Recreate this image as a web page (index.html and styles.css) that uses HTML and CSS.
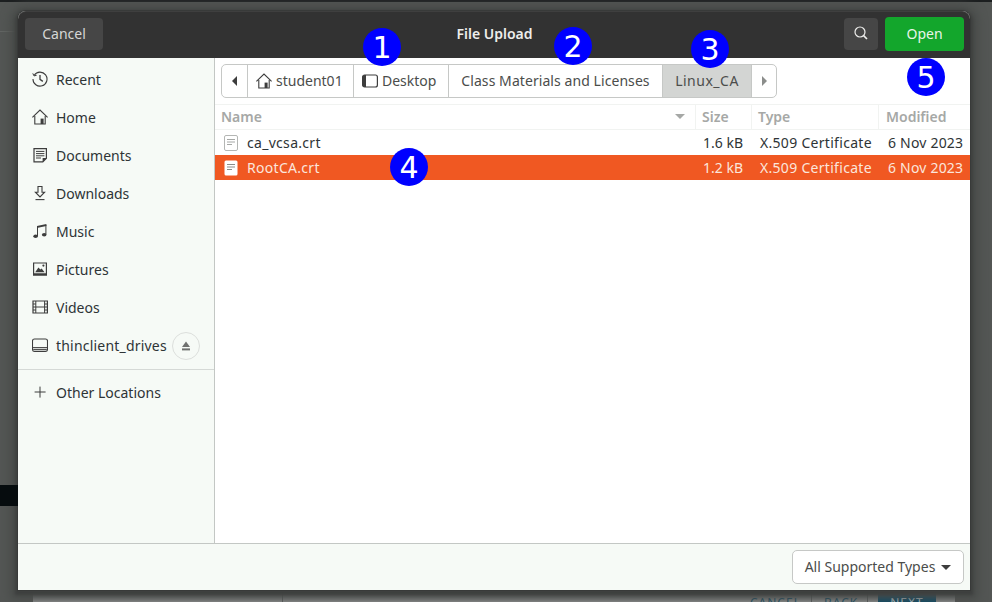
FILE: index.html
```html
<!DOCTYPE html>
<html lang="en">

<head>
    <meta charset="UTF-8">
    <title>File Upload</title>
    <link rel="stylesheet" href="styles.css">
</head>

<body>
    <div class="back-topbar"></div>
    <div class="back-rule"></div>
    <div class="back-black"></div>
    <div class="back-wizard">
        <span class="wiz-cell wiz-cancel">CANCEL</span>
        <span class="wiz-cell wiz-back">BACK</span>
        <span class="wiz-next">NEXT</span>
    </div>

    <div class="dialog">
        <header class="titlebar">
            <div class="title-left"><button class="btn btn-dark btn-cancel">Cancel</button></div>
            <div class="title">File Upload</div>
            <div class="title-right">
                <button class="btn btn-dark btn-search" aria-label="Search">
                    <svg width="16" height="16" viewBox="0 0 16 16" fill="none" stroke="#eeeeec" stroke-width="1.2"><circle cx="7" cy="7" r="5"/><path d="M10.6 10.6 14 14" stroke-width="1.6"/></svg>
                </button>
                <button class="btn btn-open">Open</button>
            </div>
        </header>

        <div class="content">
            <nav class="sidebar">
                <div class="place">
                    <svg class="place-icon" viewBox="0 0 16 16" fill="none" stroke="#3d3d3d" stroke-width="1.1"><path d="M2.2 4.2A7 7 0 1 1 1 8"/><path d="M.8 2.4 2 4.9l2.6-.6" stroke-width="1"/><path d="M8 4v4.4l2.8 2" stroke-width="1.3"/></svg>
                    <span>Recent</span>
                </div>
                <div class="place">
                    <svg class="place-icon" viewBox="0 0 16 16" fill="none" stroke="#3d3d3d" stroke-width="1.1"><path d="M.4 8.4 8 1l7.6 7.4"/><path d="M2.8 7v8h10.4V7"/><rect x="8.6" y="9.6" width="3" height="5.4" fill="#3d3d3d" stroke="none"/></svg>
                    <span>Home</span>
                </div>
                <div class="place">
                    <svg class="place-icon" viewBox="0 0 16 16" fill="none" stroke="#3d3d3d" stroke-width="1.2"><path d="M2 1.6h12.4v9.6l-3.6 3.6H2z"/><path d="M4 4.4h8.4M4 6.6h8.4M4 8.8h8.4M4 11h5" stroke-width="1"/><path d="M10.6 15v-4h4z" fill="#3d3d3d" stroke="none"/></svg>
                    <span>Documents</span>
                </div>
                <div class="place">
                    <svg class="place-icon" viewBox="0 0 16 16" fill="none" stroke="#3d3d3d" stroke-width="1.1"><path d="M6 1.5h4v5.7h2.6L8 12 3.4 7.2H6z"/><path d="M3.5 14.6h9"/></svg>
                    <span>Downloads</span>
                </div>
                <div class="place">
                    <svg class="place-icon" viewBox="0 0 16 16" fill="#3d3d3d"><path d="M5 3 14.4 1v1.9L6 4.7V13H5z"/><path d="M13.4 2h1v9.6h-1z"/><ellipse cx="3.6" cy="13.2" rx="2.3" ry="1.8"/><ellipse cx="12.2" cy="11.8" rx="2.3" ry="1.8"/></svg>
                    <span>Music</span>
                </div>
                <div class="place">
                    <svg class="place-icon" viewBox="0 0 16 16" fill="#3d3d3d"><path d="M1 1.4h14v13.4H1zm1.2 1.2v9.6h11.6V2.6z" fill-rule="evenodd"/><path d="M3.2 11.2 6.4 6.6l2 2 1.2-1 3 3.6z"/><circle cx="11.4" cy="4.6" r="1.1"/></svg>
                    <span>Pictures</span>
                </div>
                <div class="place">
                    <svg class="place-icon" viewBox="0 0 16 16" fill="none" stroke="#3d3d3d" stroke-width="1.2"><path d="M1 2h14.4v12H1z"/><path d="M3.8 2v12M12.6 2v12M3.8 8h8.8M1 5h2.8M1 8h2.8M1 11h2.8M12.6 5h2.8M12.6 8h2.8M12.6 11h2.8" stroke-width="1"/></svg>
                    <span>Videos</span>
                </div>
                <div class="place place-drive">
                    <svg class="place-icon" viewBox="0 0 16 16" fill="none" stroke="#3d3d3d" stroke-width="1.1"><rect x=".5" y="2" width="15" height="12.4" rx="2"/><path d="M.8 10.6h14.4M1.2 12.4h13.6" stroke-width="1"/></svg>
                    <span class="drive-name">thinclient_drives</span>
                    <span class="eject"><svg width="10" height="10" viewBox="0 0 10 10" fill="#6f716f"><path d="M5 .6 9 6H1z"/><path d="M1 7.4h8v2H1z"/></svg></span>
                </div>
                <div class="side-sep"></div>
                <div class="place place-other">
                    <svg class="place-icon" viewBox="0 0 16 16" fill="none" stroke="#3d3d3d" stroke-width="1"><path d="M8 2.6v11M2.6 8h11"/></svg>
                    <span>Other Locations</span>
                </div>
            </nav>

            <main class="browser">
                <div class="pathbar">
                    <div class="crumb crumb-arrow"><span class="tri tri-left"></span></div>
                    <div class="crumb crumb-home">
                        <svg width="16" height="16" viewBox="0 0 16 16" fill="none" stroke="#3d3d3d" stroke-width="1.1"><path d="M.4 8.4 8 1l7.6 7.4"/><path d="M2.8 7v8h10.4V7"/><rect x="8.6" y="9.6" width="3" height="5.4" fill="#3d3d3d" stroke="none"/></svg>
                        <span>student01</span>
                    </div>
                    <div class="crumb crumb-desktop">
                        <svg width="16" height="16" viewBox="0 0 16 16" fill="none"><rect x=".6" y="2" width="14.8" height="12" rx="2" stroke="#3d3d3d" stroke-width="1.2"/><path d="M2.6 2H4v12H2.6a2 2 0 0 1-2-2V4a2 2 0 0 1 2-2z" fill="#3d3d3d"/></svg>
                        <span>Desktop</span>
                    </div>
                    <div class="crumb crumb-class">Class Materials and Licenses</div>
                    <div class="crumb crumb-linux">Linux_CA</div>
                    <div class="crumb crumb-arrow crumb-end"><span class="tri tri-right"></span></div>
                </div>

                <div class="columns">
                    <div class="col col-name">Name<span class="sort"></span></div>
                    <div class="col">Size</div>
                    <div class="col">Type</div>
                    <div class="col col-date">Modified</div>
                </div>

                <div class="file">
                    <div class="file-name">
                        <svg width="16" height="16" viewBox="0 0 16 16" fill="#fff" stroke="#b4b6b4"><rect x="1.5" y=".5" width="13" height="15" rx="1.5"/><path d="M4 4.5h8M4 7h8M4 9.5h5" fill="none" stroke="#a6a8a6"/></svg>
                        <span>ca_vcsa.crt</span>
                    </div>
                    <div class="file-size">1.6 kB</div>
                    <div class="file-type">X.509 Certificate</div>
                    <div class="file-date">6 Nov 2023</div>
                </div>
                <div class="file file-selected">
                    <div class="file-name">
                        <svg width="16" height="16" viewBox="0 0 16 16" fill="#fff"><rect x="1.5" y=".5" width="13" height="15" rx="1.5"/><path d="M4 4.5h8M4 7h8M4 9.5h5" fill="none" stroke="#8b8d8b"/></svg>
                        <span>RootCA.crt</span>
                    </div>
                    <div class="file-size">1.2 kB</div>
                    <div class="file-type">X.509 Certificate</div>
                    <div class="file-date">6 Nov 2023</div>
                </div>
            </main>
        </div>

        <footer class="footer">
            <button class="filter">All Supported Types<span class="caret"></span></button>
        </footer>
    </div>

    <span class="badge badge-1">1</span>
    <span class="badge badge-2">2</span>
    <span class="badge badge-3">3</span>
    <span class="badge badge-4">4</span>
    <span class="badge badge-5">5</span>
</body>

</html>
```

FILE: styles.css
```css
* {
    margin: 0;
    padding: 0;
    box-sizing: border-box;
}

html,
body {
    height: 602px;
    overflow: hidden;
}

body {
    position: relative;
    padding: 11px 22px 12px 18px;
    display: flex;
    background-color: #535654;
    font-family: "Noto Sans", sans-serif;
    font-size: 14px;
    color: #2e3436;
}

button {
    font: inherit;
    border: none;
}

/* page behind the dialog */
.back-topbar {
    position: absolute;
    left: 0;
    top: 0;
    width: 100%;
    height: 2px;
    background-color: #1c1f20;
}

.back-rule {
    position: absolute;
    left: 0;
    top: 31px;
    width: 18px;
    height: 1px;
    background-color: #626563;
}

.back-black {
    position: absolute;
    z-index: 1;
    left: 0;
    top: 485px;
    width: 18px;
    height: 21px;
    background-color: #060c0e;
}

.back-wizard {
    position: absolute;
    left: 33px;
    top: 590px;
    width: 922px;
    height: 12px;
    background: linear-gradient(#6f7272, #9a9c9c);
    font-size: 12px;
    letter-spacing: 1px;
    color: #0b4f6c;
    overflow: hidden;
}

.wiz-cell {
    position: absolute;
    top: 0;
    height: 12px;
    padding-top: 7px;
    line-height: 12px;
    white-space: nowrap;
    border-left: 1px solid #5f6263;
}

.wiz-cancel {
    left: 249px;
    width: 0;
    padding-left: 467px;
}

.wiz-back {
    left: 778px;
    width: 57px;
    padding-left: 12px;
    border-right: 1px solid #5f6263;
}

.wiz-next {
    position: absolute;
    left: 845px;
    top: 0;
    width: 58px;
    height: 12px;
    padding-top: 7px;
    line-height: 12px;
    text-align: center;
    color: #d8e4ea;
    background-color: #004a6b;
}

/* dialog */
.dialog {
    position: relative;
    flex: 1;
    display: flex;
    flex-direction: column;
    border-radius: 8px 8px 0 0;
    background-color: #f6faf6;
    box-shadow: 0 0 0 1px #383a39, 0 2px 3px 3px #3e403f, 0 2px 10px 8px #484b49;
}

.titlebar {
    height: 47px;
    flex: none;
    display: grid;
    grid-template-columns: 1fr auto 1fr;
    align-items: center;
    padding: 0 6px 2px 7px;
    background-color: #323232;
    border-top: 1px solid #3f3f3f;
    border-radius: 8px 8px 0 0;
}

.title {
    padding-bottom: 2px;
    font-weight: 600;
    font-size: 14px;
    color: #eeeeec;
}

.title-right {
    display: flex;
    justify-content: flex-end;
    align-items: center;
    gap: 7px;
}

.btn {
    display: flex;
    align-items: center;
    justify-content: center;
    height: 32px;
    padding-bottom: 2px;
    border-radius: 4px;
    color: #d6d7d5;
}

.btn-dark {
    background-color: #464646;
}

.btn-cancel {
    width: 78px;
}

.btn-search {
    width: 34px;
}

.btn-open {
    width: 79px;
    height: 34px;
    background-color: #13a62c;
    color: #e8f5e9;
}

.content {
    flex: 1;
    display: flex;
    min-height: 0;
}

/* sidebar */
.sidebar {
    width: 197px;
    flex: none;
    padding-top: 3px;
    background-color: #f6faf6;
    border-right: 1px solid #c3c7c4;
}

.place {
    display: flex;
    align-items: center;
    height: 38px;
    padding-left: 14px;
    padding-bottom: 2px;
    gap: 8px;
}

.place-icon {
    width: 16px;
    height: 16px;
    flex: none;
}

.place-drive {
    padding-right: 14px;
}

.drive-name {
    flex: 1;
    letter-spacing: .2px;
    white-space: nowrap;
}

.eject {
    flex: none;
    width: 28px;
    height: 28px;
    margin: 2px 0 0 -8px;
    display: flex;
    align-items: center;
    justify-content: center;
    border: 1px solid #dcdfdc;
    border-radius: 50%;
}

.side-sep {
    height: 1px;
    margin-top: 4px;
    background-color: #d5d9d6;
}

.place-other {
    height: 46px;
}

/* file browser */
.browser {
    flex: 1;
    min-width: 0;
    background-color: #fff;
}

.pathbar {
    display: flex;
    width: 556px;
    height: 34px;
    margin: 6px 0 6px 6px;
    border: 1px solid #c6c8c6;
    border-radius: 5px;
    color: #4b4d4b;
}

.crumb {
    display: flex;
    align-items: center;
    justify-content: center;
    padding-bottom: 1px;
    gap: 4px;
    border-right: 1px solid #c6c8c6;
}

.crumb-arrow {
    width: 26px;
}

.crumb-home {
    width: 106px;
    justify-content: flex-start;
    padding-left: 8px;
}

.crumb-desktop {
    width: 95px;
    justify-content: flex-start;
    padding-left: 8px;
}

.crumb-class {
    width: 214px;
    letter-spacing: .07px;
}

.crumb-linux {
    width: 89px;
    letter-spacing: .5px;
    background-color: #d3d5d3;
}

.crumb-end {
    flex: 1;
    border-right: none;
}

.tri {
    width: 0;
    height: 0;
    border-top: 5px solid transparent;
    border-bottom: 5px solid transparent;
}

.tri-left {
    border-right: 5px solid #3d3d3d;
}

.tri-right {
    border-left: 5px solid #8b8d8b;
}

.columns,
.file {
    display: grid;
    grid-template-columns: 481px 56px 127px 1fr;
}

.columns {
    height: 26px;
    border-top: 1px solid #f1f3f1;
    border-bottom: 1px solid #f1f3f1;
    font-weight: 600;
    color: #a6a8a6;
}

.col {
    display: flex;
    align-items: center;
    padding-left: 6px;
    padding-bottom: 2px;
    border-right: 1px solid #f1f3f1;
}

.col-date {
    padding-left: 7px;
    border-right: none;
}

.col-name {
    justify-content: space-between;
    padding-right: 10px;
}

.sort {
    width: 0;
    height: 0;
    border-left: 5px solid transparent;
    border-right: 5px solid transparent;
    border-top: 5px solid #a6a8a6;
}

.file {
    height: 25px;
    align-items: center;
    color: #2e3436;
}

.file-selected {
    background-color: #f05822;
    color: #fbe6dc;
}

.file-name {
    display: flex;
    align-items: center;
    gap: 8px;
    padding-left: 8px;
    letter-spacing: .3px;
}

.file-size {
    padding-left: 7px;
}

.file-type {
    padding-left: 8px;
    letter-spacing: .3px;
}

.file-date {
    padding-left: 9px;
    letter-spacing: .2px;
    white-space: nowrap;
}

.footer {
    height: 47px;
    flex: none;
    display: flex;
    justify-content: flex-end;
    align-items: center;
    padding: 0 6px 0 0;
    border-top: 1px solid #c3c7c4;
    background-color: #f6faf6;
}

.filter {
    display: flex;
    align-items: center;
    justify-content: center;
    gap: 6px;
    width: 172px;
    height: 34px;
    padding-bottom: 2px;
    background-color: #fff;
    color: #4b4d4b;
    border: 1px solid #c6c8c6;
    border-radius: 5px;
}

.caret {
    width: 0;
    height: 0;
    margin-top: 2px;
    border-left: 5px solid transparent;
    border-right: 5px solid transparent;
    border-top: 5px solid #3d3d3d;
}

/* numbered callouts */
.badge {
    position: absolute;
    z-index: 2;
    width: 38px;
    height: 38px;
    display: flex;
    align-items: center;
    justify-content: center;
    border-radius: 50%;
    background-color: #0000ff;
    color: #fff;
    font-family: "DejaVu Sans", sans-serif;
    font-size: 30px;
}

.badge-1 {
    left: 363px;
    top: 28px;
}

.badge-2 {
    left: 554px;
    top: 27px;
}

.badge-3 {
    left: 691px;
    top: 30px;
}

.badge-4 {
    left: 390px;
    top: 148px;
}

.badge-5 {
    left: 907px;
    top: 58px;
}
```
